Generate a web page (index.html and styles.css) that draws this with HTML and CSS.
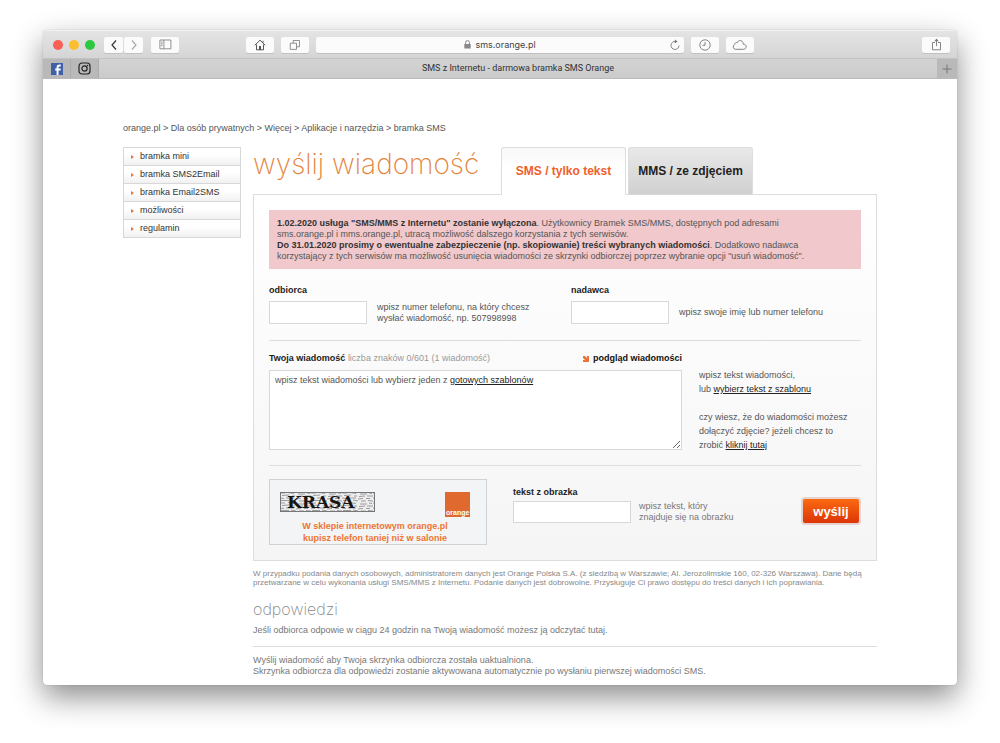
FILE: index.html
```html
<!DOCTYPE html>
<html lang="pl">

<head>
    <meta charset="UTF-8" />
    <meta name="viewport" content="width=device-width, initial-scale=1.0" />
    <title>SMS z Internetu - darmowa bramka SMS Orange</title>
    <link rel="stylesheet" href="styles.css">
</head>

<body>
    <div class="window">
        <header class="toolbar">
            <div class="toolbar-left">
                <div class="lights">
                    <span class="light red"></span>
                    <span class="light yellow"></span>
                    <span class="light green"></span>
                </div>
                <div class="nav-buttons">
                    <button class="tool narrow" aria-label="Wstecz">
                        <svg width="8" height="12" viewBox="0 0 8 12"><path d="M6 1.500 2 6l4 4.500" stroke="#333" stroke-width="1.200" /></svg>
                    </button>
                    <button class="tool narrow" aria-label="Dalej">
                        <svg width="8" height="12" viewBox="0 0 8 12"><path d="M2 1.500 6 6l-4 4.500" stroke="#aaa" stroke-width="1.200" /></svg>
                    </button>
                </div>
                <button class="tool" aria-label="Pasek boczny">
                    <svg width="13" height="11" viewBox="0 0 13 11"><path d="M.9 1h11v8.800h-11zM4.900 1v8.800M2 3h1.600M2 4.800h1.600M2 6.600h1.600" stroke="#777" stroke-width=".8" /></svg>
                </button>
            </div>
            <div class="toolbar-center">
                <button class="tool" aria-label="Strona główna">
                    <svg width="12" height="12" viewBox="0 0 12 12"><path d="M.8 6.300 6 1.200l5.200 5.100M2.500 5.500v5.300h7V5.500M9 3.700V1.800" stroke="#555" stroke-width="1" /><path d="M5 7h2v4H5z" fill="#555" /></svg>
                </button>
                <button class="tool" aria-label="Karty">
                    <svg width="12" height="12" viewBox="0 0 12 12"><path d="M1.300 4.200h6.200v6.200H1.300zM4.200 4V1.500h6.300v6.300H7.700" stroke="#777" stroke-width=".8" /></svg>
                </button>
                <div class="address">
                    <svg width="7" height="9" viewBox="0 0 7 9"><path d="M.3 4h6.400v4.500H.3z" fill="#888" /><path d="M1.600 4V2.500a1.900 1.900 0 0 1 3.800 0V4" stroke="#888" stroke-width="1" /></svg>
                    <span>sms.orange.pl</span>
                    <button class="reload" aria-label="Odśwież">
                        <svg width="12" height="12" viewBox="0 0 12 12"><path d="M6.500 2.500A4 4 0 1 0 10 6.500" stroke="#777" stroke-width=".9" /><path d="M5.800.5 8.600 2.600 5.800 4.600z" fill="#777" /></svg>
                    </button>
                </div>
                <button class="tool" aria-label="Historia">
                    <svg width="12" height="12" viewBox="0 0 12 12"><circle cx="6" cy="6" r="5.200" stroke="#777" stroke-width=".9" /><path d="M6 3v3.300H3.500" stroke="#777" stroke-width=".9" /></svg>
                </button>
                <button class="tool" aria-label="Chmura">
                    <svg width="15" height="12" viewBox="0 0 15 12"><path d="M3.500 10.300a2.500 2.500 0 0 1-.7-4.800c-.1-1.600 1.400-2.400 2.600-1.800C6 1.500 8.500.9 10 2.200c1 .8 1.300 1.900 1.200 3 1.800-.1 3 1 3 2.500s-1.100 2.600-2.700 2.600z" stroke="#777" stroke-width=".9" /></svg>
                </button>
            </div>
            <div class="toolbar-right">
                <button class="tool" aria-label="Udostępnij">
                    <svg width="11" height="13" viewBox="0 0 11 13"><path d="M4 4.500H1.500v7.300h8V4.500H7M5.500 8V2" stroke="#777" stroke-width=".9" /><path d="M5.500.6 7.700 3.300H3.300z" fill="#777" /></svg>
                </button>
            </div>
        </header>

        <div class="tabbar">
            <a href="#" class="pinned" aria-label="Facebook">
                <svg width="12" height="12" viewBox="0 0 12 12"><path d="M0 0h12v12H0z" fill="#4061a8" /><path d="M7.500 12V7.400h2l.3-1.800H7.500V4.300c0-.6.3-.9 1-.9h1.300V1.600c-2.600-.4-4.200.3-4.200 2.500v1.500H4.200v1.800h1.400V12z" fill="#fff" /></svg>
            </a>
            <a href="#" class="pinned" aria-label="Instagram">
                <svg width="13" height="13" viewBox="0 0 13 13"><rect x="1" y="1" width="11" height="11" rx="3" stroke="#222" stroke-width="1.200" /><circle cx="6.500" cy="6.500" r="2.600" stroke="#222" stroke-width="1.200" /><circle cx="9.600" cy="3.500" r=".7" fill="#222" /></svg>
            </a>
            <div class="tab-title">SMS z Internetu - darmowa bramka SMS Orange</div>
            <button class="new-tab" aria-label="Nowa karta">
                <svg width="10" height="10" viewBox="0 0 10 10"><path d="M5 .5v9M.5 5h9" stroke="#777" stroke-width="1" /></svg>
            </button>
        </div>

        <div class="page">
            <nav class="breadcrumb">orange.pl &gt; Dla osób prywatnych &gt; Więcej &gt; Aplikacje i narzędzia &gt; bramka SMS</nav>

            <div class="columns">
                <ul class="menu">
                    <li><a href="#">bramka mini</a></li>
                    <li><a href="#">bramka SMS2Email</a></li>
                    <li><a href="#">bramka Email2SMS</a></li>
                    <li><a href="#">możliwości</a></li>
                    <li><a href="#">regulamin</a></li>
                </ul>

                <main class="main">
                    <div class="heading">
                        <h1>wyślij wiadomość</h1>
                        <div class="tabs">
                            <a href="#" class="tab active">SMS / tylko tekst</a>
                            <a href="#" class="tab">MMS / ze zdjęciem</a>
                        </div>
                    </div>

                    <form class="panel">
                        <div class="alert">
                            <p><b>1.02.2020 usługa "SMS/MMS z Internetu" zostanie wyłączona</b>. Użytkownicy Bramek SMS/MMS, dostępnych pod adresami<br>sms.orange.pl i mms.orange.pl, utracą możliwość dalszego korzystania z tych serwisów.</p>
                            <p><b>Do 31.01.2020 prosimy o ewentualne zabezpieczenie (np. skopiowanie) treści wybranych wiadomości</b>. Dodatkowo nadawca<br>korzystający z tych serwisów ma możliwość usunięcia wiadomości ze skrzynki odbiorczej poprzez wybranie opcji "usuń wiadomość".</p>
                        </div>

                        <div class="people">
                            <div class="field">
                                <label for="odbiorca">odbiorca</label>
                                <div class="field-row">
                                    <input type="text" id="odbiorca">
                                    <span>wpisz numer telefonu, na który chcesz<br>wysłać wiadomość, np. 507998998</span>
                                </div>
                            </div>
                            <div class="field">
                                <label for="nadawca">nadawca</label>
                                <div class="field-row">
                                    <input type="text" id="nadawca">
                                    <span>wpisz swoje imię lub numer telefonu</span>
                                </div>
                            </div>
                        </div>

                        <div class="message">
                            <div class="message-left">
                                <div class="message-head">
                                    <span><label for="wiadomosc">Twoja wiadomość</label> <span class="counter">liczba znaków 0/601 (1 wiadomość)</span></span>
                                    <a href="#" class="preview">
                                        <svg width="6" height="6" viewBox="0 0 6 6"><path d="M0 0h2l2 2V0h2v6H0V4h2L0 2z" fill="#e8743a" /></svg>
                                        podgląd wiadomości
                                    </a>
                                </div>
                                <div class="message-box">
                                    <textarea id="wiadomosc"></textarea>
                                    <div class="placeholder">wpisz tekst wiadomości lub wybierz jeden z <a href="#">gotowych szablonów</a></div>
                                </div>
                            </div>
                            <div class="message-help">
                                <p>wpisz tekst wiadomości,<br>lub <a href="#">wybierz tekst z szablonu</a></p>
                                <p>czy wiesz, że do wiadomości możesz<br>dołączyć zdjęcie? jeżeli chcesz to<br>zrobić <a href="#">kliknij tutaj</a></p>
                            </div>
                        </div>

                        <div class="send">
                            <div class="captcha">
                                <div class="captcha-top">
                                    <svg width="95" height="20" viewBox="0 0 95 20">
                                        <defs>
                                            <pattern id="noise" width="31" height="10" patternUnits="userSpaceOnUse">
                                                <path d="M0 1h5M8 .5l6 1M18 2h7M27 1l3 .5M2 3.500l7-.5M12 4h3M17 4.500l6-.5M25 4h6M0 6l4 .5M6 6h8M16 7l5-.5M24 6.500h4M1 8.500h8M11 8l5 1M19 9h5M26 8.500l5 .5" stroke="#777" stroke-width=".7" />
                                            </pattern>
                                        </defs>
                                        <rect x=".5" y=".5" width="94" height="19" fill="#eee" stroke="#777" />
                                        <rect x="1" y="1" width="93" height="18" fill="url(#noise)" />
                                        <text class="captcha-word" x="7" y="16">KRASA</text>
                                    </svg>
                                    <svg width="25" height="25" viewBox="0 0 25 25">
                                        <path d="M0 0h25v25H0z" fill="#e0692f" />
                                        <text class="logo-word" x="1" y="23">orange</text>
                                    </svg>
                                </div>
                                <p>W sklepie internetowym orange.pl<br>kupisz telefon taniej niż w salonie</p>
                            </div>
                            <div class="field code">
                                <label for="kod">tekst z obrazka</label>
                                <div class="field-row">
                                    <input type="text" id="kod">
                                    <span>wpisz tekst, który<br>znajduje się na obrazku</span>
                                </div>
                            </div>
                            <button type="button" class="submit">wyślij</button>
                        </div>
                    </form>

                    <p class="legal">W przypadku podania danych osobowych, administratorem danych jest Orange Polska S.A. (z siedzibą w Warszawie; Al. Jerozolimskie 160, 02-326 Warszawa). Dane będą<br>przetwarzane w celu wykonania usługi SMS/MMS z Internetu. Podanie danych jest dobrowolne. Przysługuje Ci prawo dostępu do treści danych i ich poprawiania.</p>

                    <section class="replies">
                        <h2>odpowiedzi</h2>
                        <p>Jeśli odbiorca odpowie w ciągu 24 godzin na Twoją wiadomość możesz ją odczytać tutaj.</p>
                        <p class="info">Wyślij wiadomość aby Twoja skrzynka odbiorcza została uaktualniona.<br>Skrzynka odbiorcza dla odpowiedzi zostanie aktywowana automatycznie po wysłaniu pierwszej wiadomości SMS.</p>
                    </section>
                </main>
            </div>
        </div>
    </div>
</body>

</html>
```
FILE: styles.css
```css
* {
    margin: 0;
    padding: 0;
    box-sizing: border-box;
}

body {
    padding: 30px 43px 57px;
    background: #fff;
    color: #555;
    font-family: "Liberation Sans", Arial, sans-serif;
    font-size: 9px;
    line-height: 11px;
}

svg {
    display: block;
    flex: none;
    fill: none;
}

button {
    border: none;
    font-family: inherit;
}

a {
    color: #222;
}

.window {
    border-radius: 4px;
    background: #fff;
    box-shadow: 0 0 1px rgba(0, 0, 0, 0.4), 0 12px 30px rgba(0, 0, 0, 0.45);
    overflow: hidden;
}

/* browser bar */
.toolbar {
    display: grid;
    grid-template-columns: 2fr 5fr 2fr;
    align-items: center;
    height: 29px;
    border-top: 1px solid #f2f2f2;
    border-bottom: 1px solid #c2c2c2;
    background: linear-gradient(#e4e4e4, #d5d5d5);
}

.toolbar-left,
.toolbar-center,
.toolbar-right,
.lights,
.nav-buttons {
    display: flex;
    align-items: center;
}

.toolbar-left {
    padding-left: 10px;
}

.toolbar-center {
    gap: 7px;
}

.toolbar-right {
    justify-content: flex-end;
    padding-right: 7px;
}

.lights {
    gap: 6px;
    margin-right: 9px;
}

.light {
    width: 10px;
    height: 10px;
    border-radius: 50%;
}

.red {
    background: #f95f57;
}

.yellow {
    background: #fbbe2f;
}

.green {
    background: #2bc840;
}

.nav-buttons {
    gap: 1px;
    margin-right: 8px;
}

.tool {
    display: flex;
    align-items: center;
    justify-content: center;
    width: 28px;
    height: 16px;
    border-radius: 2px;
    background: #fbfbfb;
    box-shadow: 0 1px 0 rgba(0, 0, 0, 0.1);
}

.tool.narrow {
    width: 19px;
}

.address {
    position: relative;
    display: flex;
    flex: 1;
    align-items: center;
    justify-content: center;
    gap: 4px;
    height: 16px;
    border-radius: 2px;
    background: #fbfbfb;
    box-shadow: 0 1px 0 rgba(0, 0, 0, 0.1);
    color: #444;
    font-family: Inter, sans-serif;
}

.reload {
    position: absolute;
    right: 3px;
    background: none;
}

.tabbar {
    display: flex;
    height: 20px;
    border-bottom: 1px solid #bbb;
    background: linear-gradient(#d3d3d3, #cbcbcb);
}

.pinned,
.new-tab {
    display: flex;
    align-items: center;
    justify-content: center;
    width: 28px;
    background: #b9b9b9;
}

.pinned {
    border-right: 1px solid #adadad;
}

.new-tab {
    width: 20px;
}

.tab-title {
    flex: 1;
    color: #333;
    font-family: Roboto, sans-serif;
    line-height: 19px;
    text-align: center;
}

/* page */
.page {
    padding: 44px 80px 8px;
}

.breadcrumb {
    margin-bottom: 13px;
}

.columns {
    display: flex;
    align-items: flex-start;
    gap: 12px;
}

.menu {
    width: 118px;
    border: 1px solid #d8d8d8;
    list-style: none;
}

.menu li {
    border-bottom: 1px solid #d8d8d8;
    background: linear-gradient(#fff 40%, #f1f1f1);
}

.menu li:last-child {
    border-bottom: none;
}

.menu a {
    display: flex;
    align-items: center;
    color: #333;
    line-height: 17px;
    text-decoration: none;
}

.menu a::before {
    content: "";
    margin: 0 6px 0 7px;
    border: 2px solid transparent;
    border-left: 3px solid #e8743a;
    border-right: none;
}

.main {
    flex: 1;
}

.heading {
    display: flex;
    justify-content: space-between;
    padding-right: 124px;
}

h1 {
    color: #e5853c;
    font-family: Inter, sans-serif;
    font-size: 28px;
    font-weight: 200;
    line-height: 34px;
}

.tabs {
    display: flex;
    gap: 2px;
    margin-bottom: -1px;
}

.tab {
    width: 125px;
    height: 48px;
    border: 1px solid #ddd;
    border-bottom-color: #d8d8d8;
    border-radius: 3px 3px 0 0;
    background: linear-gradient(#e9e9e9, #d0d0d0);
    font-size: 12px;
    font-weight: bold;
    line-height: 46px;
    text-align: center;
    text-decoration: none;
}

.tab.active {
    border-bottom-color: #fff;
    background: linear-gradient(#f9f7f8, #fff 40%);
    color: #f0602a;
}

.panel {
    padding: 15px;
    border: 1px solid #ddd;
    background: linear-gradient(#fff, #f6f5f6);
}

.alert {
    padding: 8px 8px 7px;
    background: #f1c8cb;
}

.alert b {
    color: #333;
}

label {
    color: #222;
    font-weight: bold;
}

input,
textarea {
    display: block;
    border: 1px solid #d8d8d8;
    background: #fff;
    font: inherit;
}

.people {
    display: flex;
    padding: 16px 0;
    border-bottom: 1px solid #ddd;
}

.field {
    display: flex;
    flex: 1;
    flex-direction: column;
    gap: 5px;
}

.people .field:first-child {
    flex: none;
    width: 302px;
}

.field-row {
    display: flex;
    align-items: center;
    gap: 10px;
}

.field input {
    width: 98px;
    height: 23px;
}

.message {
    display: flex;
    gap: 17px;
    padding: 12px 0 13px;
    border-bottom: 1px solid #ddd;
}

.message-left {
    flex: 1;
}

.message-head {
    display: flex;
    justify-content: space-between;
    margin-bottom: 6px;
}

.counter {
    color: #999;
}

.preview {
    display: flex;
    align-items: center;
    gap: 4px;
    color: #111;
    font-weight: bold;
    text-decoration: none;
}

.message-box {
    position: relative;
}

textarea {
    width: 100%;
    height: 80px;
    padding: 5px;
}

.placeholder {
    position: absolute;
    top: 5px;
    left: 6px;
}

.message-help {
    width: 162px;
    padding-top: 15px;
    line-height: 14px;
}

.message-help p {
    margin-bottom: 14px;
}

.message-help p:last-child {
    margin-bottom: 0;
}

.send {
    display: flex;
    gap: 26px;
    padding-top: 13px;
}

.captcha {
    width: 218px;
    height: 66px;
    padding: 12px 16px 0 10px;
    border: 1px solid #cfd2d4;
    background: #f2f4f6;
    color: #ee7434;
    font-weight: bold;
    line-height: 12px;
    text-align: center;
}

.captcha-top {
    display: flex;
    justify-content: space-between;
    margin-bottom: 3px;
}

.captcha-word {
    fill: #151515;
    font-family: "DejaVu Serif", serif;
    font-size: 17px;
    font-weight: bold;
}

.logo-word {
    fill: #fff;
    font-size: 7px;
    font-weight: bold;
}

.code {
    gap: 3px;
    padding-top: 8px;
    color: #777;
}

.code .field-row {
    align-items: flex-start;
    gap: 8px;
}

.code input {
    width: 118px;
    height: 22px;
}

.submit {
    width: 60px;
    height: 28px;
    margin-top: 18px;
    border: 2px solid #e6d3d0;
    border-radius: 4px;
    background: linear-gradient(#fb6a10, #dc3508);
    color: #fff;
    font-size: 13px;
    font-weight: bold;
}

.legal {
    margin-top: 8px;
    color: #888;
    font-size: 8px;
    line-height: 9px;
    white-space: nowrap;
}

.replies {
    color: #777;
}

h2 {
    margin: 12px 0 6px;
    color: #888;
    font-family: Inter, sans-serif;
    font-size: 16px;
    font-weight: 200;
    line-height: 20px;
}

.info {
    margin-top: 10px;
    padding-top: 8px;
    border-top: 1px solid #ddd;
}
```
